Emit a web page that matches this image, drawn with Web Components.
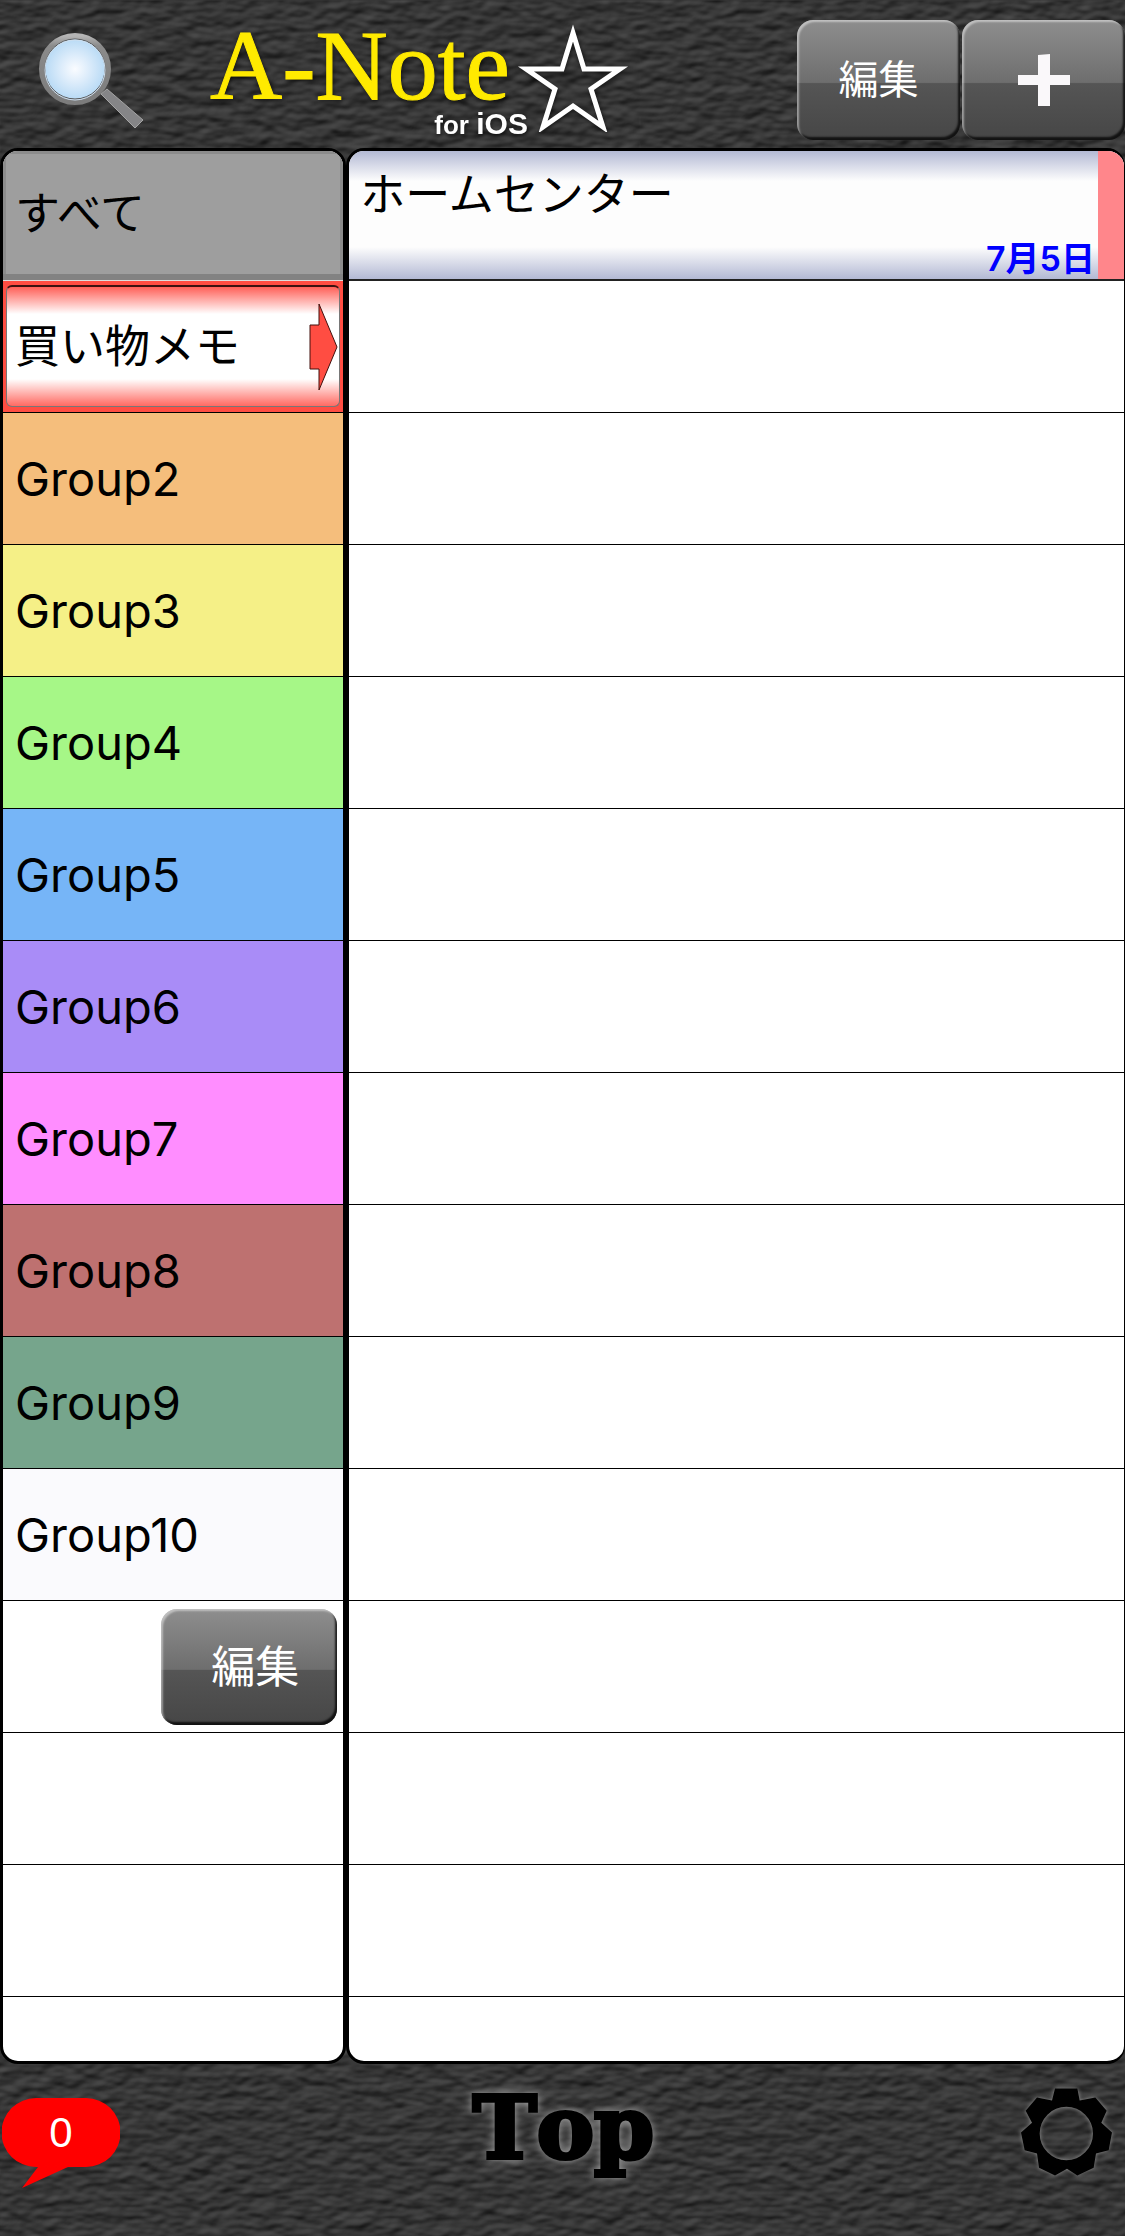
<!DOCTYPE html>
<html lang="ja">
<head>
<meta charset="utf-8">
<meta name="viewport" content="width=device-width, initial-scale=1">
<title>A-Note</title>
<style>
  :root {
    --ui-font: Inter, "Noto Sans CJK JP", sans-serif;
    --row: 132px;
    --line: #000;
  }
  body {
    margin: 0;
    font-family: var(--ui-font);
    color: #000;
  }
</style>
</head>
<body>

<note-app>
  <app-header slot="header">
    <gloss-button>編集</gloss-button>
    <gloss-button label="追加">
      <svg width="52" height="52" viewBox="0 0 52 52" aria-hidden="true">
        <path d="M20 1 32 0V21H52V31H32V52H20V31H0V21H20Z" fill="#faf8fa"/>
      </svg>
    </gloss-button>
  </app-header>

  <note-panel slot="groups" label="グループ">
    <group-row kind="all">すべて</group-row>
    <group-row kind="selected">買い物メモ</group-row>
    <group-row color="#f5be7c">Group2</group-row>
    <group-row color="#f5f087">Group3</group-row>
    <group-row color="#a6f787">Group4</group-row>
    <group-row color="#76b5f7">Group5</group-row>
    <group-row color="#a98cf7">Group6</group-row>
    <group-row color="#ff8dff">Group7</group-row>
    <group-row color="#be7170">Group8</group-row>
    <group-row color="#76a58c">Group9</group-row>
    <group-row color="#fafafd">Group10</group-row>
    <tool-row><gloss-button size="wide">編集</gloss-button></tool-row>
  </note-panel>

  <note-panel slot="notes" label="ノート" edge>
    <note-row date="7月5日" color="#ff868b">ホームセンター</note-row>
  </note-panel>

  <app-footer slot="footer" count="0">Top</app-footer>
</note-app>

<script>
/* Shared base: renders the class template into an open shadow root */
class BaseElement extends HTMLElement {
  constructor() {
    super();
    this.attachShadow({ mode: 'open' });
  }

  connectedCallback() {
    this.shadowRoot.innerHTML = this.render();
  }
}

/* Dark leather, lit from above */
const LEATHER = `url("data:image/svg+xml,${encodeURIComponent(`
  <svg xmlns="http://www.w3.org/2000/svg" width="640" height="560">
    <filter id="l" x="0" y="0" width="100%" height="100%" color-interpolation-filters="sRGB">
      <feTurbulence type="fractalNoise" baseFrequency="0.05 0.09" numOctaves="2" seed="8" stitchTiles="stitch"/>
      <feColorMatrix values="0 0 0 0 0  0 0 0 0 0  0 0 0 0 0  1 0 0 0 0"/>
      <feDiffuseLighting surfaceScale="2" diffuseConstant="0.33" lighting-color="#fff">
        <feDistantLight azimuth="250" elevation="40"/>
      </feDiffuseLighting>
    </filter>
    <rect width="640" height="560" filter="url(#l)"/>
  </svg>`)}")`;

/* ── <note-app> : page frame ─────────────────────────────── */
class NoteApp extends BaseElement {
  render() {
    return `
      <style>
        :host {
          display: flex;
          flex-direction: column;
          height: 100vh;
          background: #353535 ${LEATHER};
        }
        main {
          display: grid;
          grid-template-columns: 4fr 9fr;
          flex: 1;
          min-height: 0;
        }
        ::slotted(note-panel) { min-height: 0; }
      </style>
      <slot name="header"></slot>
      <main>
        <slot name="groups"></slot>
        <slot name="notes"></slot>
      </main>
      <slot name="footer"></slot>
    `;
  }
}

/* ── <app-header> : search, logo, actions ────────────────── */
class AppHeader extends BaseElement {
  render() {
    return `
      <style>
        :host {
          display: flex;
          align-items: center;
          height: 148px;
          box-sizing: border-box;
          padding: 12px 0 0 36px;
        }
        .search {
          display: block;
          padding: 0;
          border: 0;
          background: none;
        }
        .search svg, .star { display: block; }
        .logo {
          display: flex;
          margin: 0 auto 0 62px;
          filter: drop-shadow(1px 2px 2px rgba(0, 0, 0, .6));
        }
        h1 {
          margin: 0;
          font: 100px/88px "Liberation Serif", serif;
          color: #ffea00;
          -webkit-text-stroke: 1px #ffea00;
        }
        .words {
          display: flex;
          flex-direction: column;
        }
        .sub {
          align-self: flex-end;
          margin: 0 -18px 0 0;
          font: bold 26px/28px "Liberation Sans", sans-serif;
          color: #fff;
        }
        .sub b { font-size: 30px; }
        .star { margin-left: 6px; }
        .actions {
          display: flex;
          gap: 2px;
        }
      </style>
      <button class="search" aria-label="検索">
        <svg width="112" height="104" viewBox="0 0 112 104">
          <defs>
            <radialGradient id="glass">
              <stop offset="0" stop-color="#fafcff"/>
              <stop offset=".4" stop-color="#deedfb"/>
              <stop offset="1" stop-color="#b2d7f4"/>
            </radialGradient>
            <linearGradient id="rim" x2="0" y2="1">
              <stop offset="0" stop-color="#b5b5b5"/>
              <stop offset=".15" stop-color="#8b8b8b"/>
              <stop offset="1" stop-color="#7c7c7c"/>
            </linearGradient>
          </defs>
          <path d="M65 66 71 61 107 92 99 100Z" fill="#858587" stroke="#a5a5a5"/>
          <circle cx="39" cy="41" r="33" fill="url(#glass)" stroke="url(#rim)" stroke-width="6"/>
          <circle cx="39" cy="41" r="30" fill="none" stroke="#555"/>
          <circle cx="39" cy="42" r="30" fill="none" stroke="#cfe0f0"/>
        </svg>
      </button>
      <div class="logo">
        <div class="words">
          <h1>A-Note</h1>
          <p class="sub">for <b>iOS</b></p>
        </div>
        <svg class="star" width="114" height="110" viewBox="0 0 114 110" aria-hidden="true">
          <path d="M57 11 68 47H104L75 67 87 105 57 84 27 105 39 67 10 47H46Z"
                fill="none" stroke="#fff" stroke-width="5"/>
        </svg>
      </div>
      <div class="actions"><slot></slot></div>
    `;
  }
}

/* ── <gloss-button> : bevelled grey button ────────────────
   Attributes:
     label — accessible name when the content is an icon
     size  — "wide" for the in-list variant
   ──────────────────────────────────────────────────────── */
class GlossButton extends BaseElement {
  render() {
    const label = this.getAttribute('label');
    return `
      <style>
        :host { display: block; }
        button {
          display: flex;
          align-items: center;
          justify-content: center;
          width: 163px;
          height: 120px;
          padding: 0;
          border: 0;
          border-radius: 16px;
          background: linear-gradient(#8e8e8e, #6e6e6e 52%, #555 53%, #464646);
          box-shadow:
            inset 2px 2px 2px rgba(255, 255, 255, .45),
            inset -2px -3px 2px rgba(0, 0, 0, .75);
          color: #fff;
          font: 40px/56px var(--ui-font);
        }
        :host([size="wide"]) button {
          width: 176px;
          height: 116px;
          padding-left: 12px;
          font-size: 44px;
        }
      </style>
      <button ${label ? `aria-label="${label}"` : ''}><slot></slot></button>
    `;
  }
}

/* ── <note-panel> : rounded sheet with ruled lines ───────── */
class NotePanel extends BaseElement {
  render() {
    return `
      <style>
        :host {
          display: flex;
          flex-direction: column;
          box-sizing: border-box;
          overflow: hidden;
          border: 3px solid #000;
          border-radius: 18px;
          background:
            repeating-linear-gradient(#fff 0 131px, var(--line) 131px 132px)
            0 -2px / 100% 3960px;
        }
        :host([edge]) { border-right-width: 1px; }
        ::slotted(*) {
          flex: none;
          height: var(--row);
        }
        ::slotted(:first-child) { height: 130px; }
      </style>
      <slot></slot>
    `;
  }

  connectedCallback() {
    super.connectedCallback();
    this.setAttribute('role', 'group');
    this.setAttribute('aria-label', this.getAttribute('label'));
  }
}

/* ── <group-row> : one coloured group ─────────────────────
   Attributes:
     color — row background
     kind  — "all" or "selected"
   ──────────────────────────────────────────────────────── */
class GroupRow extends BaseElement {
  render() {
    const kind = this.getAttribute('kind') || '';
    const arrow = `
      <svg width="29" height="88" viewBox="0 0 29 88" aria-hidden="true">
        <path d="M1 22H10V1L28 44 10 87V66H1Z" fill="#ff4d42" stroke="#42100d"/>
      </svg>`;
    return `
      <style>
        :host { display: block; }
        button {
          display: flex;
          align-items: center;
          justify-content: space-between;
          box-sizing: border-box;
          width: 100%;
          height: 100%;
          padding: 0 0 0 12px;
          border: 0;
          border-bottom: 1px solid var(--line);
          background: ${this.getAttribute('color') || '#fff'};
          color: #000;
          font: 47px/64px var(--ui-font);
          text-align: left;
        }
        .all, .selected { font-size: 45px; }
        .all {
          padding-bottom: 4px;
          border-bottom-color: #ddd;
          background: #9e9e9e;
          box-shadow: inset 0 -6px #828282, inset 0 0 0 3px #8c8c8c;
        }
        .selected {
          padding: 4px 3px 5px;
          background: #ff4d42;
        }
        .selected span {
          display: flex;
          flex: 1;
          align-items: center;
          justify-content: space-between;
          box-sizing: border-box;
          height: 100%;
          padding: 0 1px 0 8px;
          border: 1px solid #777;
          border-top: 2px solid #3c1210;
          border-radius: 6px;
          background: linear-gradient(#ff6058, #fff 27px, #fff calc(100% - 27px), #ff6a62);
        }
        svg { display: block; }
      </style>
      <button class="${kind}" ${kind === 'selected' ? 'aria-pressed="true"' : ''}>
        <span><slot></slot>${kind === 'selected' ? arrow : ''}</span>
      </button>
    `;
  }
}

/* ── <tool-row> : list row holding an action ─────────────── */
class ToolRow extends BaseElement {
  render() {
    return `
      <style>
        :host {
          display: flex;
          align-items: center;
          justify-content: flex-end;
          box-sizing: border-box;
          padding-right: 6px;
        }
      </style>
      <slot></slot>
    `;
  }
}

/* ── <note-row> : title, date and group colour tab ───────── */
class NoteRow extends BaseElement {
  render() {
    return `
      <style>
        :host { display: block; }
        button {
          display: flex;
          box-sizing: border-box;
          width: 100%;
          height: 100%;
          padding: 0;
          border: 0;
          border-bottom: 2px solid #222;
          background: linear-gradient(#b3b9d4, #fdfdfd 30px, #fdfdfd calc(100% - 32px), #b3b9d4);
          color: #000;
          text-align: left;
          font: 45px/64px var(--ui-font);
        }
        .body {
          display: flex;
          flex: 1;
          flex-direction: column;
          justify-content: space-between;
          height: 100%;
          box-sizing: border-box;
          padding: 12px 3px 0 11px;
        }
        time {
          align-self: flex-end;
          color: #00f;
          font-size: 34px;
          font-weight: 600;
          line-height: 40px;
        }
        .tab {
          width: 26px;
          height: 100%;
          background: ${this.getAttribute('color')};
        }
      </style>
      <button>
        <span class="body">
          <slot></slot>
          <time>${this.getAttribute('date')}</time>
        </span>
        <span class="tab"></span>
      </button>
    `;
  }
}

/* ── <app-footer> : counter, title, settings ─────────────── */
class AppFooter extends BaseElement {
  render() {
    return `
      <style>
        :host {
          display: grid;
          grid-template-columns: 1fr auto 1fr;
          align-items: start;
          height: 172px;
          box-sizing: border-box;
          padding: 22px 0 0 2px;
        }
        button {
          display: block;
          padding: 0;
          border: 0;
          background: none;
        }
        svg { display: block; }
        .count {
          display: grid;
          justify-self: start;
          margin-top: 12px;
          color: #fff;
          font: 42px/70px "Liberation Sans", sans-serif;
        }
        .count > * { grid-area: 1 / 1; }
        h2 {
          margin: 0;
          font: bold 86px/84px "DejaVu Serif", serif;
          font-kerning: none;
          -webkit-text-stroke: 4px #000;
          filter: drop-shadow(0 0 5px #aaa);
        }
        .settings {
          justify-self: end;
          margin-right: 11px;
          filter: drop-shadow(0 0 2px #999);
        }
      </style>
      <button class="count" aria-label="通知">
        <svg width="118" height="90" viewBox="0 0 118 90" aria-hidden="true">
          <path d="M34 0H84A34 34 0 0 1 84 69H66L20 90 36 69H34A34 34 0 0 1 34 0Z" fill="#f00"/>
        </svg>
        <span>${this.getAttribute('count')}</span>
      </button>
      <h2><slot></slot></h2>
      <button class="settings" aria-label="設定">
        <svg width="95" height="92" viewBox="118 140 285 275" aria-hidden="true">
          <path fill-rule="evenodd" d="M226 147H293L300 183 347 174 381 214 365 250 397 279 387 332 349 342
            342 385 293 408 262 388 226 408 178 385 172 342 135 332 124 279 157 250 138 214 172 174 217 183Z
            M260 202A80 80 0 1 0 260 362A80 80 0 1 0 260 202Z"/>
        </svg>
      </button>
    `;
  }
}

customElements.define('note-app', NoteApp);
customElements.define('app-header', AppHeader);
customElements.define('gloss-button', GlossButton);
customElements.define('note-panel', NotePanel);
customElements.define('group-row', GroupRow);
customElements.define('tool-row', ToolRow);
customElements.define('note-row', NoteRow);
customElements.define('app-footer', AppFooter);
</script>
</body>
</html>
